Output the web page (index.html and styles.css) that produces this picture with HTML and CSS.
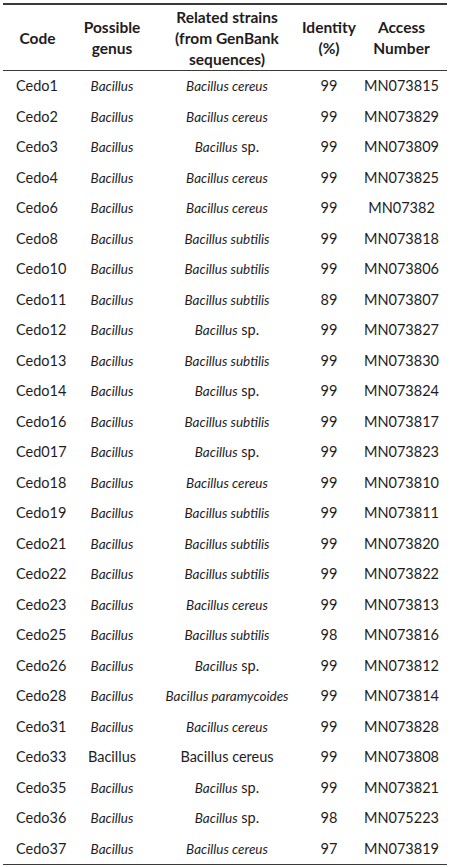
FILE: index.html
```html
<!DOCTYPE html>
<html lang="en">
<head>
<meta charset="utf-8">
<title>Table</title>
<link rel="stylesheet" href="styles.css">
</head>
<body>
<table class="data">
  <colgroup>
    <col class="c1"><col class="c2"><col class="c3"><col class="c4"><col class="c5">
  </colgroup>
  <thead>
    <tr>
      <th>Code</th>
      <th>Possible<br>genus</th>
      <th>Related strains<br>(from GenBank<br>sequences)</th>
      <th>Identity<br>(%)</th>
      <th>Access<br>Number</th>
    </tr>
  </thead>
  <tbody>
    <tr><td>Cedo1</td><td><i>Bacillus</i></td><td><i>Bacillus cereus</i></td><td>99</td><td>MN073815</td></tr>
    <tr><td>Cedo2</td><td><i>Bacillus</i></td><td><i>Bacillus cereus</i></td><td>99</td><td>MN073829</td></tr>
    <tr><td>Cedo3</td><td><i>Bacillus</i></td><td><i>Bacillus</i> sp.</td><td>99</td><td>MN073809</td></tr>
    <tr><td>Cedo4</td><td><i>Bacillus</i></td><td><i>Bacillus cereus</i></td><td>99</td><td>MN073825</td></tr>
    <tr><td>Cedo6</td><td><i>Bacillus</i></td><td><i>Bacillus cereus</i></td><td>99</td><td>MN07382</td></tr>
    <tr><td>Cedo8</td><td><i>Bacillus</i></td><td><i>Bacillus subtilis</i></td><td>99</td><td>MN073818</td></tr>
    <tr><td>Cedo10</td><td><i>Bacillus</i></td><td><i>Bacillus subtilis</i></td><td>99</td><td>MN073806</td></tr>
    <tr><td>Cedo11</td><td><i>Bacillus</i></td><td><i>Bacillus subtilis</i></td><td>89</td><td>MN073807</td></tr>
    <tr><td>Cedo12</td><td><i>Bacillus</i></td><td><i>Bacillus</i> sp.</td><td>99</td><td>MN073827</td></tr>
    <tr><td>Cedo13</td><td><i>Bacillus</i></td><td><i>Bacillus subtilis</i></td><td>99</td><td>MN073830</td></tr>
    <tr><td>Cedo14</td><td><i>Bacillus</i></td><td><i>Bacillus</i> sp.</td><td>99</td><td>MN073824</td></tr>
    <tr><td>Cedo16</td><td><i>Bacillus</i></td><td><i>Bacillus subtilis</i></td><td>99</td><td>MN073817</td></tr>
    <tr><td>Ced017</td><td><i>Bacillus</i></td><td><i>Bacillus</i> sp.</td><td>99</td><td>MN073823</td></tr>
    <tr><td>Cedo18</td><td><i>Bacillus</i></td><td><i>Bacillus cereus</i></td><td>99</td><td>MN073810</td></tr>
    <tr><td>Cedo19</td><td><i>Bacillus</i></td><td><i>Bacillus subtilis</i></td><td>99</td><td>MN073811</td></tr>
    <tr><td>Cedo21</td><td><i>Bacillus</i></td><td><i>Bacillus subtilis</i></td><td>99</td><td>MN073820</td></tr>
    <tr><td>Cedo22</td><td><i>Bacillus</i></td><td><i>Bacillus subtilis</i></td><td>99</td><td>MN073822</td></tr>
    <tr><td>Cedo23</td><td><i>Bacillus</i></td><td><i>Bacillus cereus</i></td><td>99</td><td>MN073813</td></tr>
    <tr><td>Cedo25</td><td><i>Bacillus</i></td><td><i>Bacillus subtilis</i></td><td>98</td><td>MN073816</td></tr>
    <tr><td>Cedo26</td><td><i>Bacillus</i></td><td><i>Bacillus</i> sp.</td><td>99</td><td>MN073812</td></tr>
    <tr><td>Cedo28</td><td><i>Bacillus</i></td><td><i>Bacillus paramycoides</i></td><td>99</td><td>MN073814</td></tr>
    <tr><td>Cedo31</td><td><i>Bacillus</i></td><td><i>Bacillus cereus</i></td><td>99</td><td>MN073828</td></tr>
    <tr><td>Cedo33</td><td>Bacillus</td><td>Bacillus cereus</td><td>99</td><td>MN073808</td></tr>
    <tr><td>Cedo35</td><td><i>Bacillus</i></td><td><i>Bacillus</i> sp.</td><td>99</td><td>MN073821</td></tr>
    <tr><td>Cedo36</td><td><i>Bacillus</i></td><td><i>Bacillus</i> sp.</td><td>98</td><td>MN075223</td></tr>
    <tr><td>Cedo37</td><td><i>Bacillus</i></td><td><i>Bacillus cereus</i></td><td>97</td><td>MN073819</td></tr>
  </tbody>
</table>
</body>
</html>
```
FILE: styles.css
```css
html, body {
  margin: 0;
  padding: 0;
  background: #ffffff;
}
body {
  padding: 3px 3px 0 3px;
  font-family: Lato, "Open Sans", "DejaVu Sans", sans-serif;
  font-size: 14.5px;
  color: #1f1c1d;
}
.data {
  width: 444px;
  border-collapse: collapse;
  table-layout: fixed;
  border-top: 2px solid #3a3a3a;
  border-bottom: 1.5px solid #3a3a3a;
}
.c1 { width: 69px; }
.c2 { width: 80px; }
.c3 { width: 150px; }
.c4 { width: 54px; }
.c5 { width: 91px; }
.data th {
  height: 64px;
  padding: 1px 0 0 0;
  font-size: 15.5px;
  font-weight: 700;
  line-height: 21px;
  text-align: center;
  vertical-align: middle;
  border-bottom: 1.5px solid #3a3a3a;
}
.data td {
  height: 30.5px;
  padding: 0;
  text-align: center;
  vertical-align: middle;
  white-space: nowrap;
  line-height: 18px;
}
.data td:first-child {
  text-align: left;
  padding-left: 13px;
}
.data td i {
  font-style: italic;
  font-size: 13.5px;
}
```
